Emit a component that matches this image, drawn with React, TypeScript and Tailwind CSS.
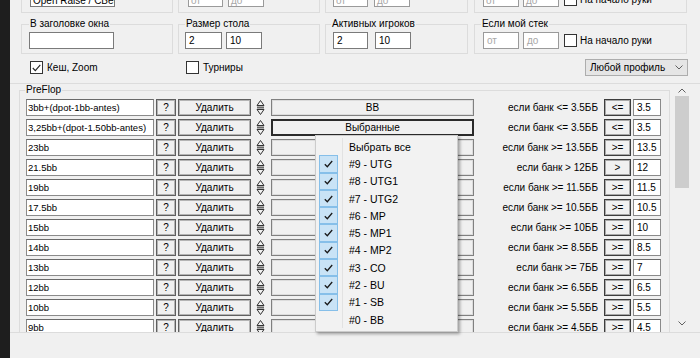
import React from "react";

type Row = { expr: string; label: string; op: string; val: string };

const rows: Row[] = [
  { expr: "3bb+(dpot-1bb-antes)", label: "если банк <= 3.5ББ", op: "<=", val: "3.5" },
  { expr: "3,25bb+(dpot-1.50bb-antes)", label: "если банк <= 3.5ББ", op: "<=", val: "3.5" },
  { expr: "23bb", label: "если банк >= 13.5ББ", op: ">=", val: "13.5" },
  { expr: "21.5bb", label: "если банк > 12ББ", op: ">", val: "12" },
  { expr: "19bb", label: "если банк >= 11.5ББ", op: ">=", val: "11.5" },
  { expr: "17.5bb", label: "если банк >= 10.5ББ", op: ">=", val: "10.5" },
  { expr: "15bb", label: "если банк >= 10ББ", op: ">=", val: "10" },
  { expr: "14bb", label: "если банк >= 8.5ББ", op: ">=", val: "8.5" },
  { expr: "13bb", label: "если банк >= 7ББ", op: ">=", val: "7" },
  { expr: "12bb", label: "если банк >= 6.5ББ", op: ">=", val: "6.5" },
  { expr: "10bb", label: "если банк >= 5.5ББ", op: ">=", val: "5.5" },
  { expr: "9bb", label: "если банк >= 4.5ББ", op: ">=", val: "4.5" },
];

const menuItems: { text: string; checked: boolean }[] = [
  { text: "Выбрать все", checked: false },
  { text: "#9 - UTG", checked: true },
  { text: "#8 - UTG1", checked: true },
  { text: "#7 - UTG2", checked: true },
  { text: "#6 - MP", checked: true },
  { text: "#5 - MP1", checked: true },
  { text: "#4 - MP2", checked: true },
  { text: "#3 - CO", checked: true },
  { text: "#2 - BU", checked: true },
  { text: "#1 - SB", checked: true },
  { text: "#0 - BB", checked: false },
];

function CheckBox({ checked }: { checked?: boolean }) {
  return (
    <div className="flex h-[13px] w-[13px] shrink-0 items-center justify-center border border-[#333333] bg-white">
      {checked && (
        <svg width="9" height="8" viewBox="0 0 9 8">
          <path d="M0.8 4 L3.3 6.6 L8.3 0.8" fill="none" stroke="#222" strokeWidth="1.1" />
        </svg>
      )}
    </div>
  );
}

function UpDown() {
  return (
    <svg width="9" height="17" viewBox="0 0 9 17" className="shrink-0">
      <path d="M4.5 1.5 L8 6.5 L1 6.5 Z" fill="none" stroke="#333" strokeWidth="1" />
      <rect x="1" y="7.5" width="7" height="2" fill="#6a6a6a" />
      <path d="M1 10.5 L8 10.5 L4.5 15.5 Z" fill="none" stroke="#333" strokeWidth="1" />
    </svg>
  );
}

function Chevron({ up }: { up?: boolean }) {
  return (
    <svg width="8" height="5" viewBox="0 0 8 5">
      <path d={up ? "M0.5 4.5 L4 1 L7.5 4.5" : "M0.5 0.5 L4 4 L7.5 0.5"} fill="none" stroke="#606060" strokeWidth="1" />
    </svg>
  );
}

function ListRow({ r, i }: { r: Row; i: number }) {
  return (
    <div className="flex h-[17px] shrink-0 items-center">
      <div className="flex h-[17px] w-[128px] shrink-0 items-center overflow-hidden whitespace-nowrap border border-[#8a8a8a] border-t-[#6a6a6a] bg-white pl-[1px] text-[9.5px]">
        {r.expr}
      </div>
      <div className="ml-[2px] flex h-[17px] w-[20px] shrink-0 items-center justify-center border border-[#5f5f5f] bg-[#f0f0f0] shadow-[inset_0_0_0_1px_#b4b4b4]">
        ?
      </div>
      <div className="ml-[2px] flex h-[17px] w-[73px] shrink-0 items-center justify-center border border-[#5f5f5f] bg-[#f0f0f0] shadow-[inset_0_0_0_1px_#b4b4b4]">
        Удалить
      </div>
      <div className="ml-[5px] flex w-[9px] shrink-0 items-center">
        <UpDown />
      </div>
      {i === 1 ? (
        <div className="ml-[6px] flex h-[17px] w-[203px] shrink-0 items-center justify-center border-2 border-[#2a2a2a] bg-[#f0f0f0]">
          Выбранные
        </div>
      ) : (
        <div className="ml-[6px] flex h-[17px] w-[203px] shrink-0 items-center justify-center border border-[#808080] bg-[#f0f0f0] shadow-[inset_0_0_0_1px_#dcdcdc]">
          {i === 0 ? "BB" : ""}
        </div>
      )}
      <div className="flex-1 whitespace-nowrap pr-[6px] text-right">{r.label}</div>
      <div className="flex h-[17px] w-[27px] shrink-0 items-center justify-center border border-[#3c3c3c] bg-[#f0f0f0] shadow-[inset_0_0_0_1px_#a8a8a8]">
        {r.op}
      </div>
      <div className="ml-[2px] flex h-[17px] w-[28px] shrink-0 items-center border border-[#8a8a8a] border-t-[#6a6a6a] bg-white pl-[3px]">
        {r.val}
      </div>
    </div>
  );
}

export default function App() {
  return (
    <div className="flex h-[358px] w-[700px] overflow-hidden bg-[#f0f0f0] font-['Liberation_Sans',Arial,sans-serif] text-[10px] leading-[12px] text-black">
      <div className="w-[10px] shrink-0 bg-[#1e1e1e]" />
      <div className="relative flex min-w-0 flex-1 flex-col">
        {/* Row 1 (cut off at top) */}
        <div className="flex h-[13px] shrink-0 gap-[5px] pl-[11px]">
          <div className="flex h-[13px] w-[152px] items-end overflow-hidden border-x border-b border-[#dcdcdc] pb-[5px] pl-[8px]">
            <div className="h-[17px] w-[85px] shrink-0 overflow-hidden whitespace-nowrap border border-[#7a7a7a] bg-white pl-[2px] pt-[4px] leading-[12px]">
              Open Raise / CBet
            </div>
          </div>
          <div className="flex h-[13px] w-[142px] items-end gap-[5px] overflow-hidden border-x border-b border-[#dcdcdc] pb-[5px] pl-[9px]">
            <div className="h-[17px] w-[35px] shrink-0 border border-[#9a9a9a] bg-white pl-[2px] pt-[4px] text-[#a8a8a8]">от</div>
            <div className="h-[17px] w-[36px] shrink-0 border border-[#9a9a9a] bg-white pl-[2px] pt-[4px] text-[#a8a8a8]">до</div>
          </div>
          <div className="flex h-[13px] w-[143px] items-end gap-[6px] overflow-hidden border-x border-b border-[#dcdcdc] pb-[5px] pl-[7px]">
            <div className="h-[17px] w-[35px] shrink-0 border border-[#9a9a9a] bg-white pl-[2px] pt-[4px] text-[#a8a8a8]">от</div>
            <div className="h-[17px] w-[36px] shrink-0 border border-[#9a9a9a] bg-white pl-[2px] pt-[4px] text-[#a8a8a8]">до</div>
          </div>
          <div className="ml-[1px] flex h-[13px] w-[213px] items-end overflow-hidden border-x border-b border-[#dcdcdc] pb-[5px] pl-[8px]">
            <div className="h-[17px] w-[36px] shrink-0 border border-[#9a9a9a] bg-white pl-[2px] pt-[4px] text-[#a8a8a8]">от</div>
            <div className="ml-[4px] h-[17px] w-[36px] shrink-0 border border-[#9a9a9a] bg-white pl-[2px] pt-[4px] text-[#a8a8a8]">до</div>
            <div className="ml-[5px] flex h-[17px] items-end pb-[1px]">
              <CheckBox />
              <span className="ml-[3px] whitespace-nowrap">На начало руки</span>
            </div>
          </div>
        </div>

        {/* Row 2 group boxes */}
        <div className="mt-[11px] flex shrink-0 gap-[5px] pl-[11px]">
          <div className="w-[152px] border border-[#dcdcdc] pb-[4px]">
            <div className="-mt-[7px] ml-[7px] w-fit bg-[#f0f0f0] px-[1px] leading-[12px]">В заголовке окна</div>
            <div className="mt-[2px] flex pl-[7px]">
              <div className="h-[17px] w-[85px] border border-[#7a7a7a] bg-white" />
            </div>
          </div>
          <div className="w-[142px] border border-[#dcdcdc] pb-[4px]">
            <div className="-mt-[7px] ml-[6px] w-fit bg-[#f0f0f0] px-[1px] leading-[12px]">Размер стола</div>
            <div className="mt-[2px] flex gap-[4px] pl-[6px]">
              <div className="flex h-[17px] w-[37px] items-center border border-[#7a7a7a] bg-white pl-[3px]">2</div>
              <div className="flex h-[17px] w-[36px] items-center border border-[#7a7a7a] bg-white pl-[3px]">10</div>
            </div>
          </div>
          <div className="w-[143px] border border-[#dcdcdc] pb-[4px]">
            <div className="-mt-[7px] ml-[5px] w-fit bg-[#f0f0f0] px-[1px] leading-[12px]">Активных игроков</div>
            <div className="mt-[2px] flex gap-[7px] pl-[7px]">
              <div className="flex h-[17px] w-[35px] items-center border border-[#7a7a7a] bg-white pl-[3px]">2</div>
              <div className="flex h-[17px] w-[36px] items-center border border-[#7a7a7a] bg-white pl-[3px]">10</div>
            </div>
          </div>
          <div className="ml-[1px] w-[213px] border border-[#dcdcdc] pb-[4px]">
            <div className="-mt-[7px] ml-[6px] w-fit bg-[#f0f0f0] px-[1px] leading-[12px]">Если мой стек</div>
            <div className="mt-[2px] flex items-center pl-[8px]">
              <div className="flex h-[17px] w-[36px] items-center border border-[#9a9a9a] bg-white pl-[3px] text-[#a8a8a8]">от</div>
              <div className="ml-[4px] flex h-[17px] w-[36px] items-center border border-[#9a9a9a] bg-white pl-[3px] text-[#a8a8a8]">до</div>
              <div className="ml-[5px]">
                <CheckBox />
              </div>
              <span className="ml-[3px] whitespace-nowrap">На начало руки</span>
            </div>
          </div>
        </div>

        {/* Checkbox row */}
        <div className="mt-[5px] flex h-[17px] shrink-0 items-center pl-[20px] pr-[12px]">
          <div className="flex w-[156px] items-center">
            <CheckBox checked />
            <span className="ml-[4px]">Кеш, Zoom</span>
          </div>
          <div className="flex items-center">
            <CheckBox />
            <span className="ml-[4px]">Турниры</span>
          </div>
          <div className="ml-auto flex h-[17px] w-[103px] items-center justify-between border border-[#adadad] bg-[#e5e5e5] pl-[4px] pr-[4px]">
            <span>Любой профиль</span>
            <Chevron />
          </div>
        </div>

        {/* Scrollable panel */}
        <div className="mt-[7px] flex h-[250px] shrink-0 overflow-hidden border-y border-[#dcdcdc]">
          <div className="pl-[9px] pt-[6px]">
            <div className="h-[300px] w-[651px] border border-[#dcdcdc]">
              <div className="-mt-[7px] ml-[5px] w-fit bg-[#f0f0f0] px-[1px] leading-[12px]">PreFlop</div>
              <div className="mt-[3px] flex flex-col gap-[3px] pl-[6px] pr-[8px]">
                {rows.map((r, i) => (
                  <ListRow key={i} r={r} i={i} />
                ))}
              </div>
            </div>
          </div>
          <div className="ml-[5px] flex w-[14px] flex-col">
            <div className="flex h-[12px] items-center justify-center">
              <Chevron up />
            </div>
            <div className="h-[92px] bg-[#cdcdcd]" />
            <div className="flex-1" />
            <div className="flex h-[17px] items-center justify-center">
              <Chevron />
            </div>
          </div>
        </div>

        <div className="flex-1" />

        {/* Dropdown menu overlay */}
        <div className="absolute left-[305px] top-[135px] flex h-[197px] w-[143px] flex-col border border-[#cccccc] bg-[#f2f2f2] pt-[2px] text-[10.5px] shadow-[2px_2px_3px_rgba(0,0,0,0.35)]">
          {menuItems.map((m, i) => (
            <div key={i} className="flex h-[17.3px] shrink-0 items-center">
              <div className="flex h-full w-[26px] shrink-0 items-center pl-[3px]">
                {m.checked && (
                  <div className="flex h-full w-[19px] items-center justify-center border border-[#86bfe9] bg-[#c9e3f6]">
                    <svg width="9" height="8" viewBox="0 0 9 8">
                      <path d="M0.8 4.2 L3.3 6.7 L8.2 1" fill="none" stroke="#1a1a1a" strokeWidth="1.3" />
                    </svg>
                  </div>
                )}
              </div>
              <div className="flex h-full flex-1 items-center border-l border-[#e2e2e2] pl-[6px] whitespace-nowrap">
                {m.text}
              </div>
            </div>
          ))}
        </div>
      </div>
    </div>
  );
}
